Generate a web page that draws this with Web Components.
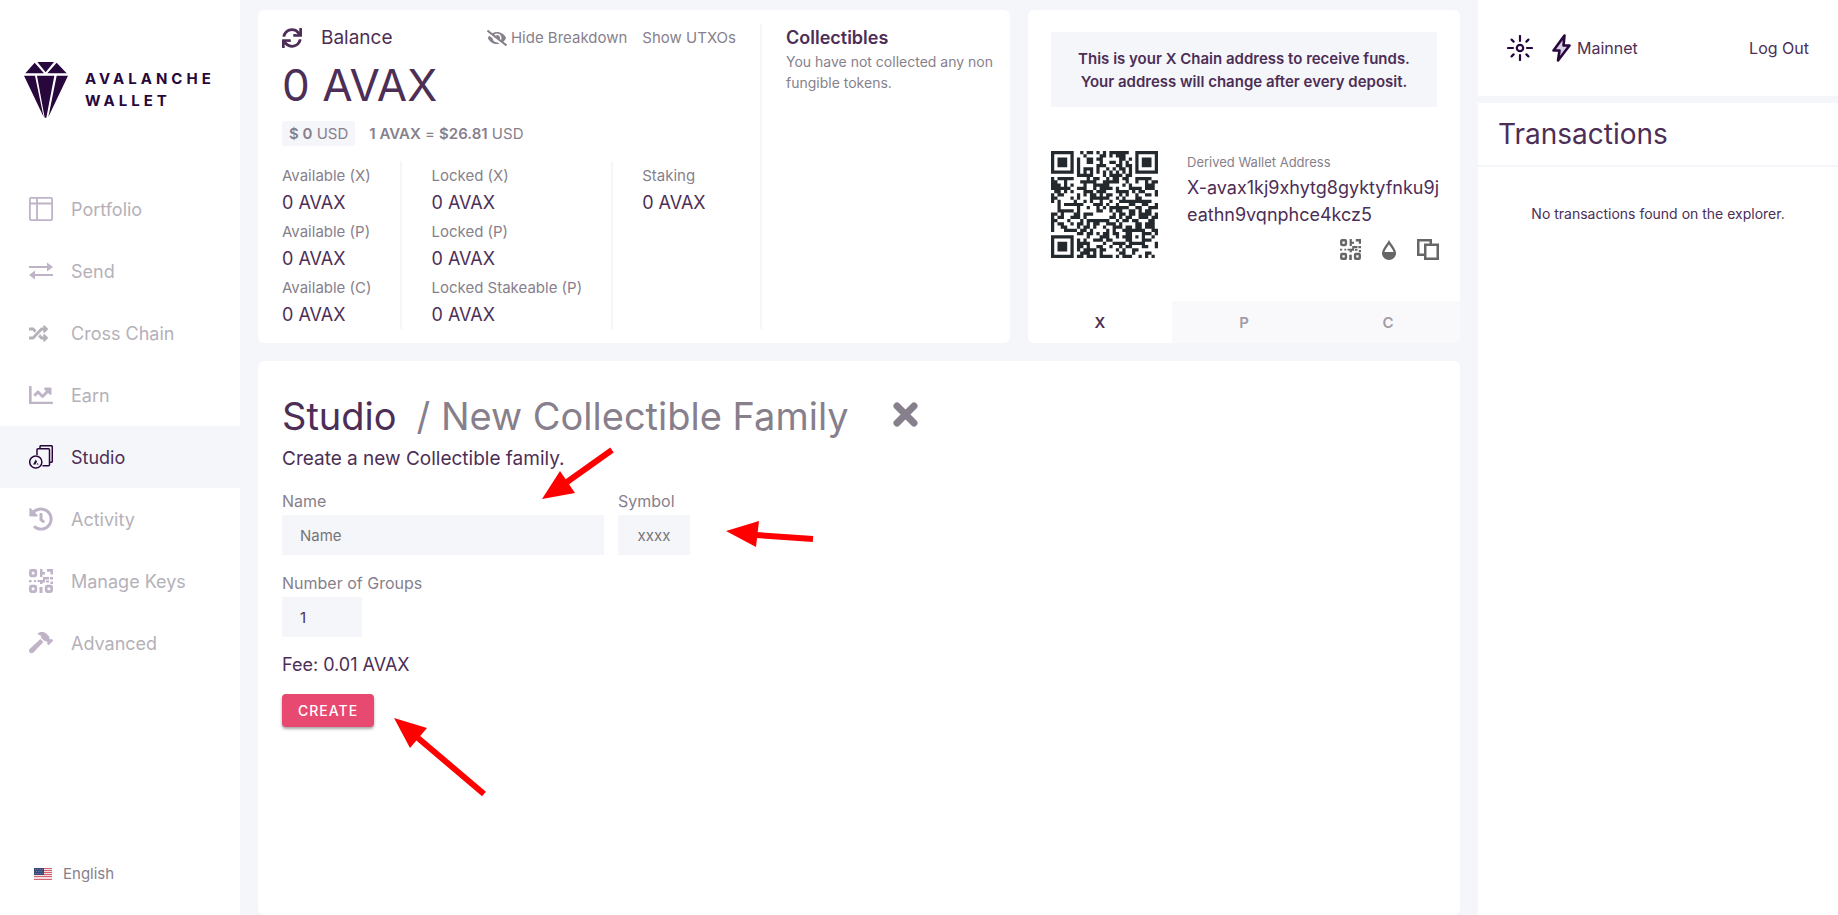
<!DOCTYPE html>
<html lang="en">
<head>
<meta charset="utf-8">
<meta name="viewport" content="width=device-width, initial-scale=1">
<title>Avalanche Wallet</title>
<style>
  :root {
    --bg: #f5f6fa;
    --panel: #fff;
    --ink: #4c2e56;
    --ink-strong: #28073c;
    --muted: #877f8c;
    --faint: #b5b1b9;
    --faint-icon: #bfb3c8;
    --accent: #e84970;
  }
  html, body { height: 100%; }
  body {
    margin: 0;
    background: var(--bg);
    color: var(--ink);
    font-family: Inter, "Liberation Sans", sans-serif;
    font-size: 15px;
  }
</style>
</head>
<body>
<wallet-app></wallet-app>

<script>
const ICONS = {
  gem: ['0 0 132 168', '<path d="M4 34 32 2 60 34ZM40 0H90L65 31ZM70 34 98 2 128 34ZM0 41H33L59 165ZM39 41H91L67 167H62ZM98 41H132L73 165Z"/>'],
  portfolio: ['0 0 24 24', '<g fill="none" stroke="currentColor" stroke-width="1.8"><rect x=".9" y=".9" width="22.2" height="22.2" rx="1"/><path d="M1 6.5H23M8 1V23"/></g>'],
  send: ['0 0 24 24', '<path d="M0 7H18V3.500L24 8 18 12.500V9H0ZM24 15H6V11.500L0 16 6 20.500V17H24Z"/>'],
  shuffle: ['0 0 512 512', '<path d="M504.971 359.029c9.373 9.373 9.373 24.569 0 33.941l-80 79.984c-15.01 15.01-40.971 4.49-40.971-16.971V416h-58.785a12.004 12.004 0 0 1-8.773-3.812l-70.556-75.596 53.333-57.143L352 336h32v-39.981c0-21.438 25.943-31.998 40.971-16.971l80 79.981zM12 176h84l52.781 56.551 53.333-57.143-70.556-75.596A11.999 11.999 0 0 0 122.785 96H12c-6.627 0-12 5.373-12 12v56c0 6.627 5.373 12 12 12zm372 0v39.984c0 21.46 25.961 31.98 40.971 16.971l80-79.984c9.373-9.373 9.373-24.569 0-33.941l-80-79.981C409.943 24.021 384 34.582 384 56.019V96h-58.785a12.004 12.004 0 0 0-8.773 3.812L96 336H12c-6.627 0-12 5.373-12 12v56c0 6.627 5.373 12 12 12h110.785c3.326 0 6.503-1.381 8.773-3.812L352 176h32z"/>'],
  chart: ['0 0 512 512', '<path d="M496 400H56V80c0-8.800-7.200-16-16-16H16C7.200 64 0 71.200 0 80v352c0 8.800 7.200 16 16 16h480c8.800 0 16-7.200 16-16v-16c0-8.800-7.200-16-16-16z"/><path d="M464 96H345.94c-21.38 0-32.09 25.85-16.97 40.97l32.4 32.4L288 242.75l-73.37-73.37c-12.5-12.5-32.76-12.5-45.25 0l-68.69 68.69c-6.25 6.25-6.25 16.38 0 22.62l22.62 22.62c6.25 6.25 16.38 6.25 22.62 0L192 237.25l73.37 73.37c12.5 12.5 32.76 12.5 45.25 0l96-96 32.4 32.4c15.12 15.12 40.97 4.41 40.97-16.97V112c.01-8.84-7.15-16-15.99-16z"/>'],
  studio: ['0 0 24 24', '<g fill="none" stroke="currentColor" stroke-width="1.5"><path d="M11 3.500V1.700Q11 .7 12 .7H22.300Q23.300 .7 23.300 1.700V16.300Q23.300 17.300 22.300 17.300H21"/><path d="M8 10V4.500Q8 3.700 9 3.700H19.500Q20.500 3.700 20.500 4.700V19.800Q20.500 20.800 19.500 20.800H13.500"/><circle cx="6.800" cy="17" r="6.100"/></g><path d="M4 19.600 6.800 14.600 8 16.800 6.400 19.600ZM7.600 19.600 8.600 17.900 9.700 19.600Z"/>'],
  history: ['0 0 512 512', '<path d="M504 255.531c.253 136.64-111.18 248.372-247.82 248.468-59.015.042-113.223-20.53-155.822-54.911-11.077-8.94-11.905-25.541-1.839-35.607l11.267-11.267c8.609-8.609 22.353-9.551 31.891-1.984C173.062 425.135 212.781 440 256 440c101.705 0 184-82.311 184-184 0-101.705-82.311-184-184-184-48.814 0-93.149 18.969-126.068 49.932l50.754 50.754c10.08 10.08 2.941 27.314-11.313 27.314H24c-8.837 0-16-7.163-16-16V38.627c0-14.254 17.234-21.393 27.314-11.314l49.372 49.372C129.209 34.136 189.552 8 256 8c136.81 0 247.747 110.78 248 247.531zm-180.912 78.784l9.823-12.63c8.138-10.463 6.253-25.542-4.21-33.679L288 256.349V152c0-13.255-10.745-24-24-24h-16c-13.255 0-24 10.745-24 24v135.651l65.409 50.874c10.463 8.137 25.541 6.253 33.679-4.21z"/>'],
  code: ['0 0 24 24', '<g fill="none" stroke="currentColor" stroke-width="2.700"><rect x="1.400" y="1.400" width="5.400" height="5.400" rx="1"/><rect x="1.400" y="17.200" width="5.400" height="5.400" rx="1"/><rect x="17.200" y="17.200" width="5.400" height="5.400" rx="1"/></g><path d="M11 0h2.500v3H16v2.500h-2.500V8H11ZM18 0H24v5.500h-2.500V2.800H18ZM14 8h6v2.500h-4v3h-2.500V15H11v-2H8.500v-2H14ZM21 8h3v2.500h-3ZM0 11h2.500v2.200H0ZM17 11.500h3v2h-3ZM5 11h2v2H5ZM21.500 12.500H24V15h-2.500ZM10.500 18h3v6h-3Z"/>'],
  hammer: ['0 0 576 512', '<path d="M571.31 193.94l-22.63-22.63c-6.25-6.25-16.38-6.25-22.63 0l-11.31 11.31-28.9-28.9c5.63-21.31.36-44.9-16.35-61.61l-45.25-45.25c-62.48-62.48-163.79-62.48-226.28 0l90.51 45.25v18.75c0 16.97 6.74 33.25 18.75 45.25l49.14 49.14c16.71 16.71 40.3 21.98 61.61 16.35l28.9 28.9-11.31 11.31c-6.25 6.25-6.25 16.38 0 22.63l22.63 22.63c6.25 6.25 16.38 6.25 22.63 0l90.51-90.51c6.23-6.24 6.23-16.37-.02-22.62zm-286.72-15.2c-3.7-3.7-6.84-7.79-9.85-11.95L19.64 404.96c-25.57 23.88-26.26 64.19-1.53 88.93s65.05 24.05 88.92-1.53l238.13-255.07c-3.96-2.91-7.9-5.87-11.44-9.41l-49.13-49.14z"/>'],
  sync: ['0 0 512 512', '<path d="M440.65 12.57l4 82.77A247.16 247.16 0 0 0 255.83 8C134.73 8 33.91 94.92 12.29 209.82A12 12 0 0 0 24.09 224h49.05a12 12 0 0 0 11.67-9.26 175.91 175.91 0 0 1 317-56.94l-101.46-4.86a12 12 0 0 0-12.57 12v47.41a12 12 0 0 0 12 12H500a12 12 0 0 0 12-12V12a12 12 0 0 0-12-12h-47.37a12 12 0 0 0-11.98 12.57zM255.83 432a175.61 175.61 0 0 1-146-77.8l101.8 4.87a12 12 0 0 0 12.57-12v-47.4a12 12 0 0 0-12-12H12a12 12 0 0 0-12 12V500a12 12 0 0 0 12 12h47.35a12 12 0 0 0 12-12.6l-4.15-82.57A247.17 247.17 0 0 0 255.83 504c121.11 0 221.93-86.92 243.55-201.82a12 12 0 0 0-11.8-14.18h-49.05a12 12 0 0 0-11.67 9.26A175.86 175.86 0 0 1 255.83 432z"/>'],
  hidden: ['0 0 640 512', '<path d="M320 400c-75.85 0-137.25-58.71-142.9-133.11L72.2 185.82c-13.79 17.3-26.48 35.59-36.72 55.59a32.35 32.35 0 0 0 0 29.19C89.71 376.41 197.07 448 320 448c26.91 0 52.87-4 77.89-10.46L346 397.39a144.13 144.13 0 0 1-26 2.61zm313.82 58.1l-110.55-85.44a331.25 331.25 0 0 0 81.25-102.07 32.35 32.35 0 0 0 0-29.19C550.29 135.59 442.93 64 320 64a308.15 308.15 0 0 0-147.32 37.7L45.46 3.37A16 16 0 0 0 23 6.18L3.37 31.45A16 16 0 0 0 6.18 53.9l588.36 454.73a16 16 0 0 0 22.46-2.81l19.64-25.27a16 16 0 0 0-2.82-22.45zm-183.72-142l-39.3-30.38A94.75 94.75 0 0 0 416 256a94.76 94.76 0 0 0-121.31-92.21A47.65 47.65 0 0 1 304 192a46.64 46.64 0 0 1-1.54 10l-73.61-56.89A142.31 142.31 0 0 1 320 112a143.92 143.92 0 0 1 144 144c0 21.63-5.29 41.79-13.9 60.11z"/>'],
  drop: ['0 0 14 20', '<path fill-rule="evenodd" d="M7 0C9 4 14 9 14 13.200A7 6.800 0 0 1 0 13.200C0 9 5 4 7 0ZM7 4.200C5.500 7 3 9.500 2.400 12H11.600C11 9.500 8.500 7 7 4.200Z"/>'],
  copy: ['0 0 22 21', '<path fill-rule="evenodd" d="M0 0H15V4.500H22V21H7V17H0ZM2.500 2.500V14.500H7V4.500H12.500V2.500ZM9.500 7V18.500H19.500V7Z"/>'],
  sun: ['0 0 26 26', '<g fill="none" stroke="currentColor" stroke-width="2.200" stroke-linecap="round"><circle cx="13" cy="13" r="3.200"/><path d="M13 1V6M13 20V25M1 13H6M20 13H25M4.600 4.600 6.600 6.600M19.400 19.400 21.400 21.400M4.600 21.400 6.600 19.400M19.400 6.600 21.400 4.600"/></g>'],
  bolt: ['0 0 19 28', '<path d="M12.500 1.500 1.500 16.500H7.500L6 26.500 17.500 11.500H11.500L12.500 1.500Z" fill="#d9cfe4" stroke="currentColor" stroke-width="2.600" stroke-linejoin="round"/>'],
  close: ['0 0 27 27', '<path d="M5 5 22 22M22 5 5 22" fill="none" stroke="currentColor" stroke-width="7" stroke-linecap="round"/>'],
  flag: ['0 0 18 12', '<path fill="#f3dfe2" d="M0 0H18V12H0Z"/><path stroke="#d4636f" stroke-width="1" d="M0 .5H18M0 2.500H18M0 4.500H18M0 6.500H18M0 8.500H18M0 11.500H18"/><path fill="#3c4a78" d="M0 0H10V7H0Z"/><path stroke="#8d96b5" stroke-width=".7" stroke-dasharray="1 1.400" d="M1 1.500H9M2 3.500H9M1 5.500H9"/>']
};

const define = (name, css, html, extra) => {
  const template = document.createElement('template');
  template.innerHTML = `<style>*{box-sizing:border-box}button,input,select{font:inherit;color:inherit;border:0;margin:0;padding:0;background:none}a{color:inherit;text-decoration:none}h1,h2,h3,p,dl,dd{margin:0;font-size:inherit;font-weight:inherit}${css}</style>${html}`;
  customElements.define(name, class extends HTMLElement {
    connectedCallback() {
      if (this.shadowRoot) return;
      const root = this.attachShadow({ mode: 'open' });
      root.append(template.content.cloneNode(true));
      if (extra) extra.call(this, root);
    }
  });
};

define('wallet-icon', ':host{display:block;flex:none;width:24px}svg{display:block;width:100%;fill:currentColor}', '', function (root) {
  const [box, art] = ICONS[this.getAttribute('name')];
  root.innerHTML += `<svg viewBox="${box}" aria-hidden="true">${art}</svg>`;
});

/* QR code, version 4 (33 x 33 modules), error correction M, byte mode. */
function qrModules(text, mask) {
  const size = 33, blocks = 2, dataLen = 32, eccLen = 18, levelBits = 0;
  const total = blocks * dataLen;
  let bits = '0100' + text.length.toString(2).padStart(8, '0');
  for (const ch of text) bits += ch.charCodeAt(0).toString(2).padStart(8, '0');
  bits += '0000';
  while (bits.length % 8) bits += '0';
  const data = bits.match(/.{8}/g).map(b => parseInt(b, 2));
  for (let pad = 0xec; data.length < total; pad ^= 0xec ^ 0x11) data.push(pad);

  const mul = (a, b) => {
    let r = 0;
    for (let i = 7; i >= 0; i--) { r = (r << 1) ^ ((r >>> 7) * 0x11d); r ^= ((b >>> i) & 1) * a; }
    return r;
  };
  const gen = new Array(eccLen).fill(0);
  gen[eccLen - 1] = 1;
  let power = 1;
  for (let i = 0; i < eccLen; i++) {
    for (let j = 0; j < eccLen; j++) { gen[j] = mul(gen[j], power); if (j + 1 < eccLen) gen[j] ^= gen[j + 1]; }
    power = mul(power, 2);
  }
  const parts = [], eccs = [];
  for (let b = 0; b < blocks; b++) {
    const part = data.slice(b * dataLen, (b + 1) * dataLen);
    const rem = new Array(eccLen).fill(0);
    for (const byte of part) {
      const f = byte ^ rem.shift();
      rem.push(0);
      gen.forEach((c, i) => { rem[i] ^= mul(c, f); });
    }
    parts.push(part); eccs.push(rem);
  }
  const words = [];
  for (let i = 0; i < dataLen; i++) parts.forEach(p => words.push(p[i]));
  for (let i = 0; i < eccLen; i++) eccs.forEach(p => words.push(p[i]));

  const grid = Array.from({ length: size }, () => new Array(size).fill(false));
  const fixed = Array.from({ length: size }, () => new Array(size).fill(false));
  const set = (x, y, v) => { if (x >= 0 && y >= 0 && x < size && y < size) { grid[y][x] = !!v; fixed[y][x] = true; } };
  for (let i = 0; i < size; i++) { set(6, i, i % 2 === 0); set(i, 6, i % 2 === 0); }
  for (const [cx, cy] of [[3, 3], [size - 4, 3], [3, size - 4]])
    for (let dy = -4; dy <= 4; dy++) for (let dx = -4; dx <= 4; dx++) {
      const d = Math.max(Math.abs(dx), Math.abs(dy));
      set(cx + dx, cy + dy, d !== 2 && d !== 4);
    }
  for (let dy = -2; dy <= 2; dy++) for (let dx = -2; dx <= 2; dx++) set(26 + dx, 26 + dy, Math.max(Math.abs(dx), Math.abs(dy)) !== 1);
  const fmt = levelBits << 3 | mask;
  let rem = fmt;
  for (let i = 0; i < 10; i++) rem = (rem << 1) ^ ((rem >>> 9) * 0x537);
  const f = (fmt << 10 | rem) ^ 0x5412;
  const bit = i => (f >>> i) & 1;
  for (let i = 0; i <= 5; i++) set(8, i, bit(i));
  set(8, 7, bit(6)); set(8, 8, bit(7)); set(7, 8, bit(8));
  for (let i = 9; i < 15; i++) set(14 - i, 8, bit(i));
  for (let i = 0; i < 8; i++) set(size - 1 - i, 8, bit(i));
  for (let i = 8; i < 15; i++) set(8, size - 15 + i, bit(i));
  set(8, size - 8, 1);

  const masks = [
    (x, y) => (x + y) % 2 === 0, (x, y) => y % 2 === 0, x => x % 3 === 0, (x, y) => (x + y) % 3 === 0,
    (x, y) => (Math.floor(x / 3) + Math.floor(y / 2)) % 2 === 0, (x, y) => x * y % 2 + x * y % 3 === 0,
    (x, y) => (x * y % 2 + x * y % 3) % 2 === 0, (x, y) => ((x + y) % 2 + x * y % 3) % 2 === 0
  ];
  let n = 0;
  for (let right = size - 1; right >= 1; right -= 2) {
    if (right === 6) right = 5;
    for (let v = 0; v < size; v++) for (let j = 0; j < 2; j++) {
      const x = right - j, up = ((right + 1) & 2) === 0, y = up ? size - 1 - v : v;
      if (fixed[y][x]) continue;
      const dark = n < words.length * 8 && (words[n >>> 3] >>> (7 - (n & 7))) & 1;
      grid[y][x] = !!dark !== masks[mask](x, y);
      n++;
    }
  }
  return grid;
}

define('qr-code', ':host{display:block;width:107px;color:#24292e}svg{display:block;width:100%;fill:currentColor}', '', function (root) {
  const grid = qrModules(this.getAttribute('value'), +this.getAttribute('mask'));
  let d = '';
  grid.forEach((row, y) => {
    for (let x = 0; x < row.length; x++) {
      if (!row[x]) continue;
      let end = x;
      while (row[end + 1]) end++;
      d += `M${x} ${y}H${end + 1}V${y + 1}H${x}Z`;
      x = end;
    }
  });
  root.innerHTML += `<svg viewBox="0 0 33 33" role="img" aria-label="Address QR code"><path d="${d}"/></svg>`;
});

define('nav-item', `
  :host{display:block}
  a{display:flex;align-items:center;gap:18px;height:62px;padding-left:29px;font-size:18px;color:var(--faint)}
  span{display:flex;width:24px;color:var(--faint-icon)}
  :host([active]) a{background:var(--bg);color:var(--ink)}
  :host([active]) span{color:var(--ink-strong)}
  wallet-icon[name=shuffle]{width:19px;color:var(--faint)}
`, '<a href="#"><span></span><slot></slot></a>', function (root) {
  root.querySelector('span').innerHTML = `<wallet-icon name="${this.getAttribute('icon')}"></wallet-icon>`;
  if (this.hasAttribute('active')) root.querySelector('a').setAttribute('aria-current', 'page');
});

define('side-bar', `
  :host{display:flex;flex-direction:column;background:var(--panel)}
  .brand{display:flex;align-items:center;gap:17px;padding:62px 0 60px 24px;color:var(--ink-strong)}
  .brand wallet-icon{width:44px}
  .brand b{font-size:15px;font-weight:700;line-height:22px;letter-spacing:4px}
  label{display:flex;align-items:center;gap:11px;margin-top:auto;padding:0 0 30px 34px;color:var(--muted);line-height:22px}
  label wallet-icon{width:18px}
  select{appearance:none;line-height:22px}
`, `
  <a class="brand" href="#"><wallet-icon name="gem"></wallet-icon><b>AVALANCHE<br>WALLET</b></a>
  <nav>
    <nav-item icon="portfolio">Portfolio</nav-item>
    <nav-item icon="send">Send</nav-item>
    <nav-item icon="shuffle">Cross Chain</nav-item>
    <nav-item icon="chart">Earn</nav-item>
    <nav-item icon="studio" active>Studio</nav-item>
    <nav-item icon="history">Activity</nav-item>
    <nav-item icon="code">Manage Keys</nav-item>
    <nav-item icon="hammer">Advanced</nav-item>
  </nav>
  <label><wallet-icon name="flag"></wallet-icon><select aria-label="Language"><option>English</option></select></label>
`);

define('balance-entry', `
  :host{display:block;margin-bottom:2px;white-space:nowrap}
  dt{line-height:30px;color:var(--muted)}
  dd{font-size:18px;line-height:24px}
`, '<dl><dt><slot></slot></dt><dd>0 AVAX</dd></dl>');

define('balance-card', `
  :host{display:grid;grid-template-columns:minmax(0,1fr) 248px;padding:14px 0;background:var(--panel);border-radius:6px}
  .funds{padding:0 24px;border-right:2px solid var(--bg)}
  header{display:flex;align-items:center;height:27px;color:var(--muted)}
  header h2{margin:0 auto 0 19px;font-size:19px;color:var(--ink)}
  header button{display:flex;align-items:center;gap:4px}
  header button + button{margin-left:15px}
  wallet-icon{width:20px}
  .refresh{color:var(--ink)}
  .total{margin:9px 0 10px;font-size:44px;line-height:51px}
  .rate{display:flex;gap:14px;line-height:25px;color:var(--muted)}
  .rate span{padding:0 7px;background:var(--bg);border-radius:3px}
  .rate b{font-weight:600}
  .split{display:flex;height:168px;margin-top:15px}
  .split div{padding:0 29px;border-right:2px solid var(--bg)}
  .split div:first-child{padding-left:0}
  .split div:last-child{border:0}
  .nft{padding:0 12px 0 24px}
  .nft h2{font-size:18px;font-weight:600;line-height:27px}
  .nft p{font-size:14px;line-height:21px;color:var(--muted)}
`, `
  <section class="funds">
    <header>
      <button class="refresh" aria-label="Refresh balance"><wallet-icon name="sync"></wallet-icon></button>
      <h2>Balance</h2>
      <button><wallet-icon name="hidden"></wallet-icon>Hide Breakdown</button>
      <button>Show UTXOs</button>
    </header>
    <p class="total">0 AVAX</p>
    <div class="rate"><span><b>$ 0</b> USD</span><p><b>1 AVAX</b> = <b>$26.81</b> USD</p></div>
    <div class="split">
      <div><balance-entry>Available (X)</balance-entry><balance-entry>Available (P)</balance-entry><balance-entry>Available (C)</balance-entry></div>
      <div><balance-entry>Locked (X)</balance-entry><balance-entry>Locked (P)</balance-entry><balance-entry>Locked Stakeable (P)</balance-entry></div>
      <div><balance-entry>Staking</balance-entry></div>
    </div>
  </section>
  <section class="nft"><h2>Collectibles</h2><p>You have not collected any non fungible tokens.</p></section>
`);

define('address-card', `
  :host{display:flex;flex-direction:column;background:var(--panel);border-radius:6px;overflow:hidden}
  .notice{margin:22px 23px 44px;padding:15px 0 14px;background:var(--bg);font-weight:600;line-height:23px;text-align:center}
  .body{display:grid;grid-template-columns:107px 1fr;gap:29px;padding:0 16px 0 23px}
  h3{font-size:13px;line-height:23px;color:var(--muted)}
  .address{font-size:18px;line-height:27px;word-break:break-all}
  .actions{display:flex;align-items:center;justify-content:flex-end;gap:21px;margin:11px 5px 0 0;color:#666}
  .actions [name=code]{width:21px}
  .actions [name=drop]{width:14px}
  .actions [name=copy]{width:22px}
  .tabs{display:grid;grid-template-columns:repeat(3,1fr);margin-top:auto}
  .tabs button{height:42px;font-weight:600;background:#f9f9fb;color:#a39ba8}
  .tabs button[aria-selected=true]{background:none;color:var(--ink)}
`, `
  <p class="notice">This is your X Chain address to receive funds.<br>Your address will change after every deposit.</p>
  <div class="body">
    <qr-code value="X-avax1kj9xhytg8gyktyfnku9jeathn9vqnphce4kcz5" mask="2"></qr-code>
    <div>
      <h3>Derived Wallet Address</h3>
      <p class="address">X-avax1kj9xhytg8gyktyfnku9jeathn9vqnphce4kcz5</p>
      <div class="actions">
        <button aria-label="Show QR code"><wallet-icon name="code"></wallet-icon></button>
        <button aria-label="Faucet"><wallet-icon name="drop"></wallet-icon></button>
        <button aria-label="Copy address"><wallet-icon name="copy"></wallet-icon></button>
      </div>
    </div>
  </div>
  <div class="tabs" role="tablist">
    <button role="tab" aria-selected="true">X</button><button role="tab">P</button><button role="tab">C</button>
  </div>
`);

define('studio-panel', `
  :host{display:block;position:relative;padding:31px 24px;background:var(--panel);border-radius:6px}
  header{display:flex;align-items:center;font-size:38px;line-height:48px}
  header h2{margin-left:20px;color:var(--muted)}
  header button{margin-left:43px;padding-bottom:4px;color:var(--muted)}
  header wallet-icon{width:27px}
  .lead{font-size:19px;line-height:38px}
  form{display:grid;justify-items:start}
  .row{display:flex;gap:14px;margin:12px 0 17px}
  .field{display:grid;gap:2px}
  .field label{font-size:16px;line-height:23px;color:var(--muted)}
  .field input{height:40px;padding:0 18px;background:var(--bg);border-radius:0}
  input::placeholder{color:#757575}
  #name{width:322px}
  #symbol{width:72px;padding:0;text-align:center}
  #groups{width:80px}
  .fee{margin:16px 0 17px;font-size:18px;line-height:24px}
  .create{height:33px;padding:0 16px;border-radius:4px;background:var(--accent);color:#fff;font-size:14px;font-weight:500;letter-spacing:1px;box-shadow:0 2px 3px rgba(0,0,0,.35)}
  .pointers{position:absolute;left:0;top:0;width:600px;height:460px;pointer-events:none}
`, `
  <header><h1>Studio</h1><h2>/ New Collectible Family</h2><button aria-label="Close"><wallet-icon name="close"></wallet-icon></button></header>
  <p class="lead">Create a new Collectible family.</p>
  <form>
    <div class="row">
      <div class="field"><label for="name">Name</label><input id="name" type="text" placeholder="Name"></div>
      <div class="field"><label for="symbol">Symbol</label><input id="symbol" type="text" placeholder="xxxx" maxlength="4"></div>
    </div>
    <div class="field"><label for="groups">Number of Groups</label><input id="groups" type="text" inputmode="numeric" value="1"></div>
    <p class="fee">Fee: 0.01 AVAX</p>
    <button class="create" type="button">CREATE</button>
  </form>
  <svg class="pointers" viewBox="0 0 600 460" fill="red" stroke="red" aria-hidden="true">
    <path d="M354 89 309 121M555 178 498 174M226 433 160 377" stroke-width="6"/>
    <path stroke="none" d="M284 138 302 110 317 132ZM468 170 501 160 498 186ZM136 357 169 367 152 387Z"/>
  </svg>
`);

define('activity-bar', `
  :host{display:flex;flex-direction:column;gap:7px}
  header{display:flex;align-items:center;height:96px;padding:0 29px;background:var(--panel);font-size:16px}
  header wallet-icon{color:var(--ink-strong)}
  [name=sun]{width:26px}
  [name=bolt]{width:19px}
  .network{display:flex;align-items:center;gap:6px;margin:0 auto 0 19px}
  section{flex:1;background:var(--panel)}
  h2{padding:0 20px;font-size:28px;line-height:62px;border-bottom:2px solid var(--bg)}
  p{margin-top:37px;font-size:14px;line-height:20px;text-align:center}
`, `
  <header>
    <button aria-label="Toggle theme"><wallet-icon name="sun"></wallet-icon></button>
    <button class="network"><wallet-icon name="bolt"></wallet-icon>Mainnet</button>
    <button>Log Out</button>
  </header>
  <section><h2>Transactions</h2><p>No transactions found on the explorer.</p></section>
`);

define('wallet-app', `
  :host{display:grid;grid-template-columns:240px minmax(0,1fr) 360px;min-height:100vh}
  main{display:grid;grid-template-columns:minmax(0,1fr) 432px;grid-template-rows:auto 1fr;gap:18px;padding:10px 18px 0}
  studio-panel{grid-column:1 / -1}
`, `
  <side-bar></side-bar>
  <main><balance-card></balance-card><address-card></address-card><studio-panel></studio-panel></main>
  <activity-bar></activity-bar>
`);
</script>
</body>
</html>
